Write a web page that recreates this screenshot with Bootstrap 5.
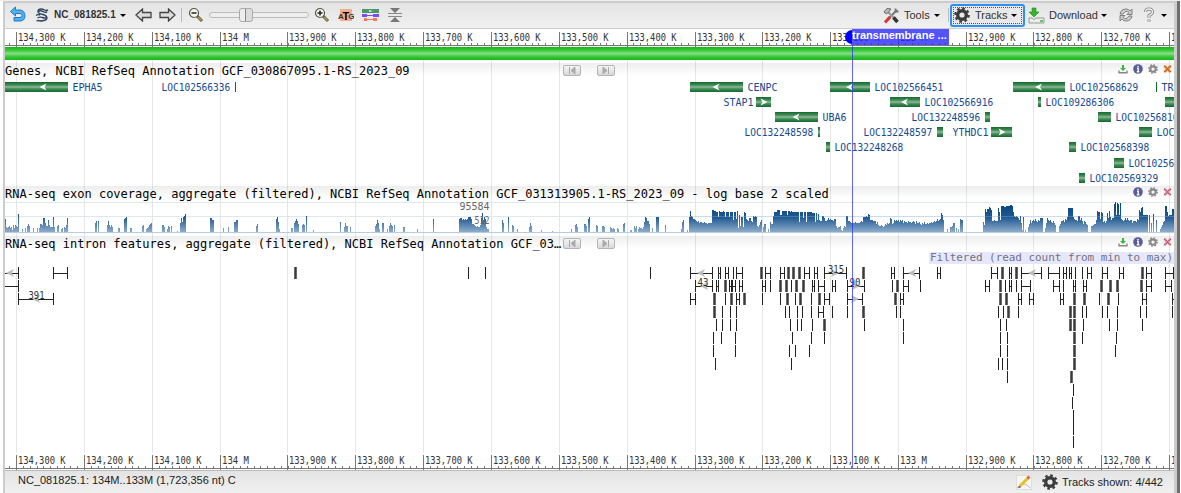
<!DOCTYPE html>
<html lang="en">
<head>
<meta charset="utf-8">
<title>NC_081825.1 sequence viewer</title>
<link href="https://cdn.jsdelivr.net/npm/bootstrap@5.3.0/dist/css/bootstrap.min.css" rel="stylesheet">
<style>
body{width:1181px;height:493px;overflow:hidden;background:#fff;font:11px/14px "Liberation Sans",sans-serif;color:#333;border-top:1px solid #eee}
.viewer{width:1174px;margin-left:3px;height:492px;border:solid #ccc;border-width:2px 3px 0 2px;flex:none}
.edge{width:3px;background:#6f6f6f}
.tools{height:26px;background:linear-gradient(#e4e4e4,#f0f0f0);border-bottom:1px solid #ccc;padding-bottom:1px}
.tools svg,.status svg,.acts svg{flex:none;display:block}
.caret{width:0;height:0;border:3px solid transparent;border-top:3px solid #000;border-bottom:0;flex:none}
.sep{width:1px;height:14px;background:#bbb;flex:none}
.tracksbtn{width:75px;height:23px;border:2px solid #2f8ff0;border-radius:3px;background:#e9e9e9;padding-left:2px;outline:1px dotted #555;outline-offset:-4px}
.slide{width:100px;height:16px}
.slide i{position:absolute;left:0;right:0;top:5px;height:6px;border:1px solid #bbb;border-radius:4px;background:#eee}
.slide b{position:absolute;left:30px;top:1px;width:14px;height:14px;border:1px solid #aaa;border-radius:3px;background:linear-gradient(90deg,#eee 5px,#888 5px,#888 6px,#ddd 6px)}
.seqbar{height:13px;background:linear-gradient(#19b519,#35c935 25%,#86dd86 50%,#35c935 75%,#19b519);margin-bottom:3px}
.head{height:16px;background:linear-gradient(rgba(0,0,0,.07),rgba(0,0,0,0) 12px);font:12px/16px "DejaVu Sans Mono",monospace;color:#000;white-space:pre}
.head .ttl{width:558px}
.nav2{width:18px;height:11px;border:1px solid #b4b4b4;border-radius:2px;background:linear-gradient(#f5f5f5,#d8d8d8)}
.nav2 svg{display:block}
.status{height:23px;border-top:1px solid #bbb;background:linear-gradient(#e4e4e4,#f0f0f0);color:#222}
svg.plot{display:block;width:1169px;overflow:hidden}
svg text{font-family:"DejaVu Sans Mono",monospace;font-size:9.6px}
.flag{left:847px;top:0;width:97px;height:16px;background:rgba(40,40,255,.8);color:#fff;font:bold 11px/13px "Liberation Sans",sans-serif;white-space:nowrap}
.half{left:840px;top:1px;width:7px;height:14px;border-radius:8px 0 0 8px;background:#00f}
.mline{left:847px;top:16px;width:1px;height:423px;background:rgba(50,50,255,.75)}
.gridbg{left:0;top:0;z-index:0}
.fg{position:relative;z-index:1}
.marker{z-index:2}
</style>
</head>
<body class="d-flex">
<svg width="0" height="0" class="position-absolute"><defs>
<linearGradient id="gg" x1="0" y1="0" x2="0" y2="1"><stop offset="0" stop-color="#14692f"/><stop offset=".3" stop-color="#3f8a55"/><stop offset=".5" stop-color="#8dba98"/><stop offset=".7" stop-color="#3f8a55"/><stop offset="1" stop-color="#14692f"/></linearGradient>
<linearGradient id="cg" gradientUnits="userSpaceOnUse" x1="0" y1="206" x2="0" y2="232"><stop offset="0" stop-color="#0b4784"/><stop offset=".45" stop-color="#215b93"/><stop offset="1" stop-color="#8eaccb"/></linearGradient>
<symbol id="gear" viewBox="0 0 16 16"><circle cx="8" cy="8" r="4.3" fill="none" stroke="currentColor" stroke-width="3.4"/><circle cx="8" cy="8" r="6.6" fill="none" stroke="currentColor" stroke-width="2.4" stroke-dasharray="2.6 2.58"/></symbol>
<symbol id="info" viewBox="0 0 10 10"><circle cx="5" cy="5" r="4.8" fill="#5c5c98"/><path d="M5 2v1.3M4 4.4h1.2v3.1M3.8 7.8h2.6" stroke="#fff" stroke-width="1.4" fill="none"/></symbol>
<symbol id="dl" viewBox="0 0 10 10"><path d="M4 1h2v3h2L5 7 2 4h2z" fill="#3db83d"/><path d="M1 6.5v2.3h8V6.5" fill="none" stroke="#888" stroke-width="1.4"/></symbol>
<symbol id="cls" viewBox="0 0 10 10"><path d="M1.5 1.5l7 7M8.5 1.5l-7 7" stroke="#f0a838" stroke-width="3"/><path d="M1.5 1.5l7 7M8.5 1.5l-7 7" stroke="#c44432" stroke-width="1.6" stroke-dasharray="1.4 .7"/></symbol>
<symbol id="cls2" viewBox="0 0 10 10"><path d="M1.5 1.5l7 7M8.5 1.5l-7 7" stroke="#e9b0a0" stroke-width="3"/><path d="M1.5 1.5l7 7M8.5 1.5l-7 7" stroke="#b83a78" stroke-width="1.5" stroke-dasharray="1.4 .7"/></symbol>
</defs></svg>
<div class="viewer d-flex flex-column">
  <div class="tools d-flex align-items-center">
    <svg width="18" height="18" viewBox="0 0 18 18" style="margin-left:4px"><path d="M6.500 1L1.500 5.500l5 4.500V7.500H11q2 0 2 2t-2 2H5V15h6.500q4.500-.5 4.500-5.200T11.500 4H6.500z" fill="#4fb2ee" stroke="#2479c0"/></svg>
    <svg width="14" height="16" viewBox="0 0 14 16" style="margin-left:8px"><path d="M3 4.500q0-2.500 3-2.500 2 0 3.500 1t3.500 0M3 4.500q0 2 4 2.800t5 3.200M1 8.500q1.500-1.500 4-.5M3 4.500q3-1.500 5 0t4 .5M12 10.500q0 2.500-3 3T5 14M12 10.500q-2 1-4.500 0T2.500 11M5 14q-2-1-3.500 0" fill="none" stroke="#34495f" stroke-width="1.400"/></svg>
    <b style="font-size:10px;margin-left:5px;width:66px">NC_081825.1</b><span class="caret"></span>
    <svg width="17" height="14" viewBox="0 0 17 14" style="margin-left:9px"><path d="M1 7l6.500-6v3.500H16v5H7.500V13z" fill="#ddd" stroke="#444" stroke-width="1.300"/></svg>
    <svg width="17" height="14" viewBox="0 0 17 14" style="margin-left:7px"><path d="M16 7L9.500 1v3.500H1v5h8.500V13z" fill="#ddd" stroke="#444" stroke-width="1.300"/></svg>
    <span class="sep" style="margin-left:5px"></span>
    <svg width="16" height="16" viewBox="0 0 16 16" style="margin-left:6px"><path d="M9 9l5 5" stroke="#555" stroke-width="3"/><path d="M10 10l3.500 3.500" stroke="#b8a53c" stroke-width="1.500"/><circle cx="6" cy="6" r="4.500" fill="#f8f8e8" stroke="#555" stroke-width="1.200"/><path d="M3.500 6h5" stroke="#222" stroke-width="1.500"/></svg>
    <span class="slide position-relative" style="margin-left:5px"><i></i><b></b></span>
    <svg width="16" height="16" viewBox="0 0 16 16" style="margin-left:5px"><path d="M9 9l5 5" stroke="#555" stroke-width="3"/><path d="M10 10l3.500 3.500" stroke="#b8a53c" stroke-width="1.500"/><circle cx="6" cy="6" r="4.500" fill="#f8f8e8" stroke="#555" stroke-width="1.200"/><path d="M3.500 6h5M6 3.500v5" stroke="#222" stroke-width="1.500"/></svg>
    <svg width="16" height="14" viewBox="0 0 16 14" style="margin-left:8px"><rect x="2" y="1" width="12" height="12" fill="#f3ad8d"/><text x="0" y="10.500" style="font:bold 8px 'Liberation Sans'" fill="#333">A</text><text x="4.500" y="11.500" style="font:bold 11px 'Liberation Sans'">T</text><text x="10.300" y="10.500" style="font:bold 8px 'Liberation Sans'" fill="#333">G</text></svg>
    <svg width="17" height="14" viewBox="0 0 17 14" style="margin-left:8px"><path d="M0 1h17v4H0z" fill="#4b9767"/><path d="M7 2l4 1-4 1z" fill="#eee"/><path d="M1 7.500h15" stroke="#7c4dff"/><path d="M0 6h5v3H0zM11 6h6v3h-6z" fill="#7c4dff"/><path d="M3 11.500h11" stroke="#ee7b5c"/><path d="M2 10h3v3H2zM11 10h4v3h-4z" fill="#ee7b5c"/></svg>
    <svg width="14" height="16" viewBox="0 0 14 16" style="margin-left:9px"><path d="M2 1h10L7 6zM2 15h10L7 10z" fill="#777"/><path d="M0 6.500h14M0 9.500h14" stroke="#888"/></svg>
    <svg class="ms-auto" width="17" height="17" viewBox="0 0 17 17"><path d="M4 13L14 3" stroke="#777" stroke-width="2"/><path d="M2 15.500l5-5.500" stroke="#d33" stroke-width="3"/><path d="M5 5l6 6" stroke="#999" stroke-width="2"/><path d="M10.500 10.500l4 4.500" stroke="#333" stroke-width="3.500"/><path d="M1 5l3-3.500L8 2 6 4.500 3.500 7z" fill="#bbb" stroke="#666"/><path d="M12.500 1.500v3h3" fill="none" stroke="#777" stroke-width="1.800"/></svg>
    <span style="margin-left:4px;width:30px">Tools</span><span class="caret"></span>
    <span class="sep" style="margin-left:8px"></span>
    <span class="tracksbtn d-flex align-items-center" style="margin-left:1px"><svg width="16" height="16" color="#3c3c3c"><use href="#gear"/></svg><span style="margin-left:5px;width:36px">Tracks</span><span class="caret"></span></span>
    <svg width="17" height="17" viewBox="0 0 17 17" style="margin-left:3px"><path d="M4 1h4v4h3L6 10 1 5h3z" fill="#35b52c" stroke="#238a1d" stroke-width=".6"/><path d="M1 11h3l2 1.500L8 11h8v5H1z" fill="#e8efe8" stroke="#999"/><path d="M12 14h3" stroke="#3b3" stroke-width="1.500"/></svg>
    <span style="margin-left:4px;width:52px">Download</span><span class="caret"></span>
    <svg width="16" height="16" viewBox="0 0 16 16" style="margin-left:11px"><path d="M2 7q1-5 6-5 3 0 4 2l2-2v5.500H9l2-2Q8 2.500 5 7zM14 9q-1 5-6 5-3 0-4-2l-2 2V8.500h5l-2 2Q8 13.500 11 9z" fill="#ccc" stroke="#777" stroke-width=".9"/></svg>
    <svg width="12" height="16" viewBox="0 0 12 16" style="margin-left:9px"><path d="M2.500 5q0-3 3.500-3t3.500 3Q9.500 7 6 8.500V11M6 12.500v2" fill="none" stroke="#888" stroke-width="3"/><path d="M2.500 5q0-3 3.500-3t3.500 3Q9.500 7 6 8.500V11M6 13v1" fill="none" stroke="#eee" stroke-width="1.300"/></svg>
    <span class="caret" style="margin:0 7px 0 6px"></span>
  </div>
  <div class="position-relative">
    <svg class="plot gridbg position-absolute" id="grid" height="424" viewBox="5 29 1169 424"></svg>
    <div class="fg">
      <svg class="plot" id="r1" height="18" viewBox="5 29 1169 18"></svg>
      <div class="seqbar"></div>
      <div class="head d-flex"><span class="ttl">Genes, NCBI RefSeq Annotation GCF_030867095.1-RS_2023_09</span>
        <div class="d-flex gap-3 mt-0"><span class="nav2" style="margin-top:2px"><svg width="16" height="9"><path d="M5.500 1v7M11 1L7 4.500 11 8z" fill="#aaa" stroke="#aaa"/></svg></span><span class="nav2" style="margin-top:2px"><svg width="16" height="9"><path d="M10.500 1v7M5 1l4 3.500L5 8z" fill="#aaa" stroke="#aaa"/></svg></span></div>
        <div class="acts d-flex ms-auto" style="gap:5px;padding:1px 2px 0 0"><svg width="10" height="10"><use href="#dl"/></svg><svg width="10" height="10"><use href="#info"/></svg><svg width="10" height="10" color="#8a8a8a"><use href="#gear"/></svg><svg width="9" height="10"><use href="#cls"/></svg></div></div>
      <svg class="plot" id="genes" height="107" viewBox="5 79 1169 107"></svg>
      <div class="head d-flex"><span>RNA-seq exon coverage, aggregate (filtered), NCBI RefSeq Annotation GCF_031313905.1-RS_2023_09 - log base 2 scaled</span>
        <div class="acts d-flex ms-auto" style="gap:5px;padding:1px 2px 0 0"><svg width="10" height="10"><use href="#info"/></svg><svg width="10" height="10" color="#8a8a8a"><use href="#gear"/></svg><svg width="9" height="10"><use href="#cls2"/></svg></div></div>
      <svg class="plot" id="cov" height="34" viewBox="5 202 1169 34"></svg>
      <div class="head d-flex"><span class="ttl">RNA-seq intron features, aggregate (filtered), NCBI RefSeq Annotation GCF_03…</span>
        <div class="d-flex gap-3"><span class="nav2" style="margin-top:2px"><svg width="16" height="9"><path d="M5.500 1v7M11 1L7 4.500 11 8z" fill="#aaa" stroke="#aaa"/></svg></span><span class="nav2" style="margin-top:2px"><svg width="16" height="9"><path d="M10.500 1v7M5 1l4 3.500L5 8z" fill="#aaa" stroke="#aaa"/></svg></span></div>
        <div class="acts d-flex ms-auto" style="gap:5px;padding:1px 2px 0 0"><svg width="10" height="10"><use href="#dl"/></svg><svg width="10" height="10"><use href="#info"/></svg><svg width="10" height="10" color="#8a8a8a"><use href="#gear"/></svg><svg width="9" height="10"><use href="#cls2"/></svg></div></div>
      <svg class="plot" id="introns" height="201" viewBox="5 252 1169 201"></svg>
    </div>
    <div class="half marker position-absolute"></div><div class="mline marker position-absolute"></div>
    <div class="flag marker position-absolute">transmembrane ...</div>
  </div>
  <svg class="plot" id="r2" height="17" viewBox="5 453 1169 17"></svg>
  <div class="status d-flex align-items-center"><span style="margin:-4px 0 0 13px">NC_081825.1: 134M..133M (1,723,356 nt) C</span>
    <svg class="ms-auto" width="16" height="15" viewBox="0 0 16 15"><rect x=".5" y=".5" width="15" height="14" fill="#f7f7f0" stroke="#ddd"/><path d="M1 13q5-5 8-4t5 4" fill="none" stroke="#bbb"/><path d="M4 11l8-8" stroke="#e6c02e" stroke-width="3"/><path d="M11.500 3.500l2-2" stroke="#c66" stroke-width="3"/><path d="M2.500 12.500l2-1" stroke="#555" stroke-width="1.500"/></svg>
    <svg width="16" height="16" color="#3c3c3c" style="margin-left:10px"><use href="#gear"/></svg>
    <span style="margin:0 11px 0 4px">Tracks shown: 4/442</span></div>
</div>
<div class="edge"></div>
<script src="https://cdn.jsdelivr.net/npm/bootstrap@5.3.0/dist/js/bootstrap.bundle.min.js"></script>
<script>
const put=(id,s)=>document.getElementById(id).innerHTML=s;
const rect=(x,y,w,h,f)=>`<rect x="${x}" y="${y}" width="${w}" height="${h}" fill="${f}"/>`;
const text=(x,y,s,w,f)=>`<text x="${x}" y="${y}" textLength="${w}" lengthAdjust="spacingAndGlyphs" fill="${f}">${s}</text>`;
// ruler and grid
const xs=[16,84,152,220,287,355,423,491,559,627,695,762,830,898,966,1033,1101,1169];
const names=['134,300 K','134,200 K','134,100 K','134 M','133,900 K','133,800 K','133,700 K','133,600 K','133,500 K','133,400 K','133,300 K','133,200 K','133,100 K','133 M','132,900 K','132,800 K','132,700 K','132,600 K'];
put('grid',xs.map(x=>rect(x,60,1,392,'#e6e6e6')).join(''));
function ruler(id,line){
  let s=rect(5,line,1169,1,'#777');
  for(let k=-1;k<171;k++)s+=rect(Math.round(16.2+k*6.783),line-2,1,2,'#777');
  xs.forEach((x,i)=>s+=rect(x,line-13,1,15,'#777')+text(x+2,line-4.5,names[i],names[i].length>6?47.5:27,'#333'));
  put(id,s);
}
ruler('r1',45);ruler('r2',468);
// genes: row, start, end, arrow, label, label x
const genes=[[0,5,68,'L','EPHA5',72.5],[0,235,236,'','LOC102566336',161.500],[0,690,743,'L','CENPC',747.5],[0,830,870,'L','LOC102566451',874.5],[0,1013,1065,'L','LOC102568629',1069.5],[0,1156,1157,'','TR',1161.5],
[1,756,771,'R','STAP1',723.5],[1,890,920,'L','LOC102566916',924.5],[1,1038,1041,'','LOC109286306',1045.5],[1,1165,1174,'','',0],
[2,775,818,'L','UBA6',822.5],[2,985,990,'','LOC132248596',911.500],[2,1098,1111,'','LOC102568161',1115.5],
[3,818,820,'','LOC132248598',744.5],[3,937,943,'','LOC132248597',863.5],[3,991,1012,'R','YTHDC1',952.500],[3,1139,1152,'','LOC',1156.5],
[4,826,830,'','LOC132248268',834.5],[4,1069,1076,'','LOC102568398',1080.5],[5,1114,1124,'','LOC10256',1128.5],[6,1079,1085,'','LOC102569329',1089.5]];
put('genes',genes.map(([r,a,b,d,n,x])=>{
  const y=82+Math.round(r*15.1),m=(a+b)/2+(b-a>60?7:0),c=y+5;
  let s=rect(a,y,b-a,10,b-a<2?'#14692f':'url(#gg)');
  if(d=='L')s+=`<path d="M${m-4} ${c}l7-3.500-2 3.500 2 3.500z" fill="#fff"/>`;
  if(d=='R')s+=`<path d="M${m+4} ${c}l-7-3.500 2 3.500-2 3.500z" fill="#fff"/>`;
  return s+(n?text(x,y+8.5,n,n.length>6?n.length*5.73:n.length*6,'#164a92'):'');
}).join(''));
// coverage: start x followed by per-pixel heights
const cov=[[5,13,5,4,5,6,4,5,2,7,4,7,6,5,18],[22,3],[25,4,0,6,8,6],[33,4],[37,4,0,4,8,8,7,14,14,9,6,6,12,7,5,5,5,15,5],[57,6,7],[61,3,4,0,5,4,7,14],[95,9,11,0,11],[107,7,11,7,5,7,5],[118,4,4],[124,13,14,15],[130,4,4],[142,6,7],[146,3,4,5,7,8,9],[162,7,7,5,0,0,3,6,5,0,6],[177,1],[180,9,14,10,15,16,18],[210,14,14,12,12],[223,4],[228,5],[234,10,10,12,12],[256,6,8],[276,13,15,10,3],[291,4,4,0,9,11,13,11,8],[302,7,8,7,0,16],[313,2],[340,10],[344,5,9,6,6],[350,5],[375,6,8,12,9,3,0,0,9,9],[387,3,0,6,9,7,6,0,7],[403,5,5],[417,3],[433,13],
[459,13,14,14,12,13,12,13,12,13,15,15,15,13,8,8,7,6,5,6,5,5,7,14,19,12,15,13,5,3,3],[502,12,9],[508,15],[512,7,6],[517,3],[529,5,9,6],[541,2],[552,1],[571,3],[575,7,8,5],[584,8,8,6,0,13,15],[596,7,6],[602,6,6,5],[610,5,4,3,4,3,0,0,4,3],
[623,8,9],[630,2,2],[634,6,4,6,0,3,5,4,4,3,5,10,15,14,11,11,8],[652,4],[656,15,15,15],[665,7],[681,3,10,12],[687,2],
[689,15,21,16,15,13,13,12,11,10,11,9,10,10,9,9,10,9,9,8,9,9,9,9,22,22,21,21,20,20,15,21,20,20,20,21,20,15,20,20,20,15,20,20,20,12,20,20,13,21,4,17,6,15,15,5,20,19,13,12,11,14,14,11,10,16,15,16,15,6,5,7,10,12,0,5,8],[765,8],[768,3,0,10,8,8,16,20,20,20,22,22,22,17,17,21,21,21,21,21,17,21,21,20,21,20,20,20,20,20,20,20,10,20,20,20,14,20,20,10,20,20,20,20,20,19,19,19,10,19,12,18,12,11,11,16,12,12,11,11,11,14],
[820,7,11,16,16,14,11,11,12,11,12,13,12,12,11,13,13,6,4,5,5,6,2,1,4,6,5,16,16,11,11,10,9,9,9,9,10,9,9,9,9,10,11,10,15,15,15,16,15,18,17,12,12,12,11,11,11,8,10,7,6,6,7,6,5,6,8,7,9,8,9,14,13,8,9,12,11,12,11,12,10,12,11,12,9,11,10,10,9,11,10,10,9,10,11,10,8,11,9,9,10,8,7,9,8,10,8,8,9,8,9,9,10,9,10,11,10,11,13,11,12,13,19,17,12],[947,3,0,0,5,5,6,9,9,0,4,0,3,0,13,12,12],
[983,10,7,23,20,23,23,25,24,22,11,11,12,11,11,11,24,20,12,26,26,26,25,25,26,26,26,26,27,27,26,20,16,15,16,15,14,12,16,9,2,15],[1025,2],[1028,5,8,12,9,11,12,11,13,11,10,12,11,14,14,14],[1045,4,9,14,12,11,12,10,9,11,9,7],[1059,6,8,11,11,12,10,13,12,15,24,24,24,24,24,15,13,12,12,11,16,16,12,14,11,8,11,10,8,7],[1091,6,6,7,8,8,12,21,20,20,13,20,19,10,11,9,11,19,14,21,15,12,14,14,28,30,17,29,28,17,29,13,12,11,12,14,12,14,12,11,12,12,9,11,11,11,10,13,12,22,20,24,25,17,17,17,17,17],[1149,17,0,9,0,18],[1156,12],[1160,3,5,7,10,11,26,26,20,16,17,17,17,23,23]];
let bars='';cov.forEach(([x,...h])=>h.forEach((v,i)=>{if(v)bars+=rect(x+i,232-v,1,v,'url(#cg)')}));
put('cov',rect(5,202,1169,1,'#dce8f4')+rect(5,216,1169,1,'#dce8f4')+bars+rect(690,216,484,1,'rgba(160,190,225,.3)')+rect(5,232,1169,1,'#b4cce6')+text(459.5,210,'95584',30,'#666')+text(474.5,224,'512',15,'#666'));
// introns, one string per row: x = cap, a-b = span, x* = block
const rows=['5-18 53-67 295* 468 485 650 690-712 718-720 725-728 733 736-742 761* 765-770 780-784 788* 793* 799* 804-809 814-817 824-846 863* 891-894 903-919 937-940 991-997 1002* 1009-1011 1016* 1021-1041 1048-1059 1063-1066 1069-1071 1075 1082 1087-1091 1102-1107 1119-1123 1142* 1146-1151 1165-1173',
'5-18 695-712 716-718 725* 729-731 732-735 739-742 762-765 770 780* 786* 791 796* 803* 812-814 818-824 832-835 847-864 892 897* 903-908 920 985-989 1000* 1005 1009-1011 1016 1021-1030 1053-1059 1063 1073-1075 1083-1086 1101* 1110* 1117* 1141* 1146-1151 1165-1171',
'18-53 690-695 714* 725 731* 736-739 744* 762 780 787* 795 800* 811 819* 824-829 847-862 895* 900-903 1000* 1006* 1018-1021 1029-1033 1060-1063 1074* 1084* 1099 1108* 1118 1142-1146 1172-1174',
'714* 722 730 736 785 789 797 802 811 818-823 832 847 863* 896 900 998 1003 1008* 1018 1070* 1074* 1082 1086 1102 1107 1117 1140 1146 1172',
'716 722 730 736 790 797 801 812 824* 864 903 1000 1006 1070* 1074* 1083 1109 1117 1142','713 721 735 792 811 824 903 1000 1007 1074* 1082 1116','713 735 789 795 809 1000 1007 1074* 1115','715 791 998 1002 1007 1074*','1007 1071*','1073','1072','1073','1073','1073'];
let s='';
rows.forEach((row,r)=>{const y=267+r*13;row.split(' ').forEach(t=>{
  if(t.endsWith('*')){const x=parseInt(t);s+=rect(x-1,y,3,12,'#999')+rect(x-.5,y,2,12,'#3a3a3a')}
  else{const [a,b]=t.split('-').map(Number);if(a>5)s+=rect(a,y,1,12,'#222');if(b)s+=rect(b,y,1,12,'#222')+rect(a,y+6,b-a,1,'#222')}
});});
s+=rect(1073,420,1,4,'#222');
[[6,0,-1],[697,0,-1],[700,1,-1],[32,2,-1],[908,0,-1],[1028,0,-1],[839,0,1],[860,1,1],[859,2,1]].forEach(([x,r,d])=>s+=`<path d="M${x} ${273+r*13}l${-8*d}-4 ${2*d} 4 ${-2*d} 4z" fill="#bbb"/>`.replace(`M${x} `,`M${d<0?x:x} `).replace(/l8-4 -2 4 2 4z/,'l8-4-2 4 2 4z'));
s+=text(28.5,299,'391',16,'#333')+text(828,273,'315',16,'#333')+text(697.5,286,'43',11,'#333')+text(849.5,286,'90',11,'#333');
s+=rect(929,252,245,12,'#e7e7fb')+`<text x="930" y="261" textLength="243" style="font-size:11px" fill="#737380">Filtered (read count from min to max)</text>`;
put('introns',s);
</script>
</body>
</html>
